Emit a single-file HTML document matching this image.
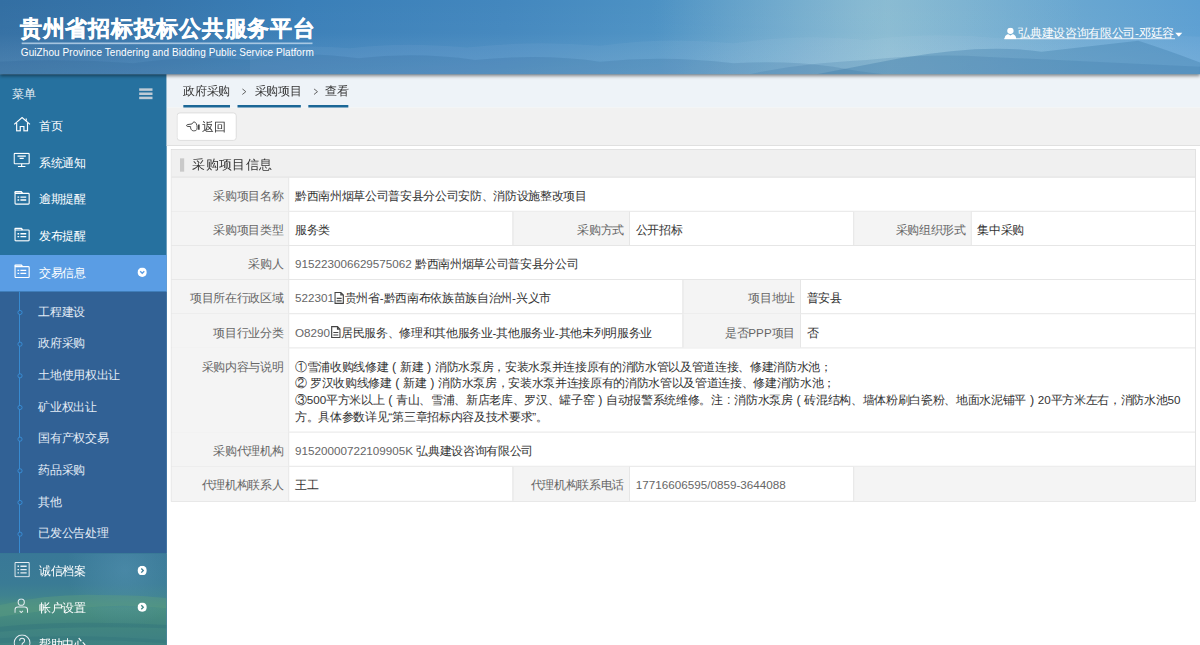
<!DOCTYPE html>
<html><head><meta charset="utf-8">
<style>
*{margin:0;padding:0;box-sizing:border-box}
html,body{width:1200px;height:645px;overflow:hidden;background:#fff}
body{font-family:"Liberation Sans",sans-serif}
#root{transform:scale(0.833333);transform-origin:0 0;width:1440px;height:774px;position:relative;overflow:hidden;font-size:14px;color:#333}
/* header */
#hdr{position:absolute;left:0;top:0;width:1440px;height:89px;z-index:3;overflow:hidden;
 background:linear-gradient(90deg,#2e6b9d 0%,#3478ae 25%,#4286bd 45%,#5a9bc8 65%,#73abcc 80%,#5f9fcc 100%);
 box-shadow:0 2px 4px rgba(0,0,0,.45)}
#hdr .bgsvg{position:absolute;left:0;top:0}
#hdr .title{position:absolute;left:24px;top:15.5px;font-size:27px;font-weight:bold;color:#fff;white-space:nowrap;letter-spacing:0.3px;-webkit-text-stroke:0.45px #fff}
#hdr .uline{position:absolute;left:26px;top:50.5px;width:349px;height:2px;background:rgba(200,222,240,.75)}
#hdr .sub{position:absolute;left:25px;top:56px;font-size:12px;letter-spacing:0.09px;color:#fff;white-space:nowrap}
#hdr .user{position:absolute;left:1205px;top:30px;font-size:14px;color:#fff;white-space:nowrap;text-decoration:underline}
/* sidebar */
#side{position:absolute;left:0;top:89px;width:200px;height:685px;background:#26719f;color:#fff}
#side .mt{height:41px;position:relative}
#side .mt span{position:absolute;left:15px;top:16px;font-size:14px;color:#e6f0f6}
#side .mt .hb{position:absolute;left:167px;top:17px;width:16px;height:14px}
#side .mt .hb i{position:absolute;left:0;width:16px;height:3px;background:#bfcbd6}
#side .mi{height:44px;position:relative}
#side .mi .tx{position:absolute;left:47px;top:12.5px;font-size:14px;color:#fff}
#side .mi svg{position:absolute}
#side .mi.act{background:#5a9de4}
#side .sub{background:#316195;padding:5px 0;position:relative}
#side .sub .vl{position:absolute;left:23px;top:0;bottom:0;width:1.3px;background:#3a93dd}
#side .si{height:38px;position:relative}
#side .si .tx{position:absolute;left:46px;top:11px;font-size:14px;color:#e3ecf5}
#side .si .dot{position:absolute;left:20.5px;top:16.5px;width:6px;height:6px;border:1.3px solid #3a93dd;border-radius:50%;background:#316195}
#side .low{position:relative;height:120px;overflow:hidden;background:#3c7d90}
#side .low .mi{position:relative;z-index:1}
.chev{position:absolute;left:164.5px;width:11.4px;height:11.4px;border-radius:50%;background:#fff}
/* content */
#bc{position:absolute;left:200px;top:89px;width:1240px;height:40px;background:#eef3f8}
#bc .it{position:absolute;top:0;height:40px;border-bottom:3px solid #1b6797;font-size:14px;color:#333;line-height:26px;padding-top:7px;white-space:nowrap}
#bc .it svg{position:absolute;top:17px}
#tb{position:absolute;left:200px;top:129px;width:1240px;height:46px;background:#f1f1f1;border-bottom:1px solid #dcdcdc}
#tb .btn{position:absolute;left:12px;top:6px;width:72px;height:34px;background:#fff;border:1px solid #d9d9d9;border-radius:4px;font-size:14px;color:#333}
#tb .btn span{position:absolute;left:30px;top:7.5px}
#tb .btn svg{position:absolute;left:10px;top:9px}
#panel{position:absolute;left:205px;top:179px;width:1230px;border:1px solid #ddd;background:#fff}
#panel .ph{height:33px;background:#f0f0f0;border-bottom:1px solid #ddd;position:relative}
#panel .ph .bar{position:absolute;left:10px;top:10px;width:5px;height:16px;background:#c9c9c9}
#panel .ph .t{position:absolute;left:25px;top:8px;font-size:16px;color:#333}
.r{display:flex;height:41px;border-bottom:1px solid #e1e1e1}
.r.last{border-bottom:none;height:41px}
.r.big{height:101px}
.c{border-left:1px solid #e1e1e1;height:100%;padding:1.5px 7px 0;font-size:14px;line-height:40px;white-space:nowrap;overflow:hidden;flex:none}
.c:first-child{border-left:none}
.c.l{background:#f4f4f4;color:#666;text-align:right;padding-right:6px}
.c.v{color:#333}
.c .n{color:#666}
.fp{font-style:normal;display:inline-block;width:14px;text-align:center;font-size:15px;line-height:14px}
.c svg.doc{display:inline-block;vertical-align:-2px;margin:0 0.5px}
.r.big .c{line-height:20px;padding-top:11.8px}
</style></head>
<body><div id="root">
<div id="hdr">
 <svg class="bgsvg" width="1440" height="89" viewBox="0 0 1440 89">
  <defs>
   <linearGradient id="hg" x1="0" y1="0" x2="1440" y2="0" gradientUnits="userSpaceOnUse">
    <stop offset="0" stop-color="#336fa3"/><stop offset="0.12" stop-color="#3675ab"/><stop offset="0.25" stop-color="#3a7fb8"/>
    <stop offset="0.42" stop-color="#4387be"/><stop offset="0.55" stop-color="#4d92c4"/><stop offset="0.66" stop-color="#69a5cb"/>
    <stop offset="0.74" stop-color="#80b5cf"/><stop offset="0.84" stop-color="#70abd0"/><stop offset="1" stop-color="#5c9fd2"/>
   </linearGradient>
   <linearGradient id="mist" x1="0" y1="0" x2="0" y2="89" gradientUnits="userSpaceOnUse">
    <stop offset="0" stop-color="#ffffff" stop-opacity="0"/><stop offset="0.45" stop-color="#ffffff" stop-opacity="0.02"/><stop offset="1" stop-color="#cfe3ee" stop-opacity="0.16"/>
   </linearGradient>
   <radialGradient id="glow" cx="1040" cy="10" r="260" gradientUnits="userSpaceOnUse">
    <stop offset="0" stop-color="#a9cfdc" stop-opacity="0.28"/><stop offset="1" stop-color="#a9cfdc" stop-opacity="0"/>
   </radialGradient>
  </defs>
  <rect width="1440" height="89" fill="url(#hg)"/>
  <rect width="1440" height="89" fill="url(#glow)"/>
  <rect width="1440" height="89" fill="url(#mist)"/>
  <path d="M300 89 L300 62 Q360 52 420 58 Q480 50 560 57 Q640 48 720 55 Q800 44 880 52 Q960 40 1040 48 Q1120 38 1200 46 Q1300 36 1440 44 L1440 89 Z" fill="#e8f2f8" fill-opacity="0.05"/>
  <path d="M0 89 L0 74 Q80 70 160 76 Q230 66 300 72 Q360 60 430 70 Q500 62 570 72 Q650 64 720 74 Q800 66 880 76 Q940 72 1000 80 Q1030 86 1060 89 Z" fill="#1f5a88" fill-opacity="0.16"/>
  <path d="M980 89 L1080 70 Q1180 52 1250 62 L1366 49 Q1400 60 1440 75 L1440 89 Z" fill="#3b7aa8" fill-opacity="0.35"/>
  <path d="M900 89 Q960 76 1040 72 Q1120 64 1180 68 L1440 80 L1440 89 Z" fill="#2f6c9a" fill-opacity="0.18"/>
 </svg>
 <div class="title">贵州省招标投标公共服务平台</div>
 <div class="uline"></div>
 <div class="sub">GuiZhou Province Tendering and Bidding Public Service Platform</div>
 <svg style="position:absolute;left:1205px;top:33px" width="15" height="14" viewBox="0 0 15 14"><circle cx="7.5" cy="4" r="3.8" fill="#fff"/><path d="M0.5 14 C0.5 9.5 3 8.2 5 8 L7.5 9.5 L10 8 C12 8.2 14.5 9.5 14.5 14 Z" fill="#fff"/></svg>
 <div class="user" style="left:1205px;width:205px;height:13.6px;top:33px;border-bottom:1px solid #fff;text-decoration:none"></div>
 <div class="user" style="left:1222px;top:31.2px;text-decoration:none">弘典建设咨询有限公司-邓廷容</div>
 <svg style="position:absolute;left:1410px;top:39px" width="9" height="5" viewBox="0 0 9 5"><path d="M0 0H9L4.5 5Z" fill="#fff"/></svg>
</div>
<div id="side">
 <div class="mt"><span>菜单</span><div class="hb"><i style="top:0"></i><i style="top:5px"></i><i style="top:10px"></i></div></div>
 <div class="mi"><svg style="left:16px;top:10px" width="21" height="18" viewBox="0 0 21 18" fill="none" stroke="#fff" stroke-width="1.4"><path d="M1 9.2 L10.5 1 L20 9.2"/><path d="M15.5 5 V2.2"/><path d="M4 7.5 V17 H8.3 V11.8 H12.7 V17 H17 V7.5"/></svg><span class="tx">首页</span></div>
 <div class="mi"><svg style="left:16px;top:9px" width="20" height="18" viewBox="0 0 20 18" fill="none" stroke="#fff" stroke-width="1.4"><rect x="1" y="1" width="18" height="12.5" rx="1"/><path d="M5 4.3 H15 M7.5 7 H12.5 M10 13.5 V16.5 M5.5 16.8 H14.5"/></svg><span class="tx">系统通知</span></div>
 <div class="mi"><svg style="left:16.5px;top:10.5px" width="19" height="17" viewBox="0 0 19 17" fill="none" stroke="#fff" stroke-width="1.4"><path d="M1 3 H17 Q18 3 18 4 V15 Q18 16 17 16 H2 Q1 16 1 15 Z"/><path d="M1 2.6 V1.8 Q1 1 2 1 H8.5 L10 3" stroke-width="1.8"/><path d="M4 7.5 H6 M7.5 7.5 H14.5 M4 11 H6 M7.5 11 H14.5" stroke-width="1.6"/></svg><span class="tx">逾期提醒</span></div>
 <div class="mi"><svg style="left:16.5px;top:10.5px" width="19" height="17" viewBox="0 0 19 17" fill="none" stroke="#fff" stroke-width="1.4"><path d="M1 3 H17 Q18 3 18 4 V15 Q18 16 17 16 H2 Q1 16 1 15 Z"/><path d="M1 2.6 V1.8 Q1 1 2 1 H8.5 L10 3" stroke-width="1.8"/><path d="M4 7.5 H6 M7.5 7.5 H14.5 M4 11 H6 M7.5 11 H14.5" stroke-width="1.6"/></svg><span class="tx">发布提醒</span></div>
 <div class="mi act"><svg style="left:16.5px;top:10.5px" width="19" height="17" viewBox="0 0 19 17" fill="none" stroke="#fff" stroke-width="1.4"><path d="M1 3 H17 Q18 3 18 4 V15 Q18 16 17 16 H2 Q1 16 1 15 Z"/><path d="M1 2.6 V1.8 Q1 1 2 1 H8.5 L10 3" stroke-width="1.8"/><path d="M4 7.5 H6 M7.5 7.5 H14.5 M4 11 H6 M7.5 11 H14.5" stroke-width="1.6"/></svg><span class="tx">交易信息</span>
  <svg style="left:164.7px;top:15.3px" width="11.4" height="11.4" viewBox="0 0 12 12"><circle cx="6" cy="6" r="6" fill="#fff"/><path d="M3.4 4.8 L6 7.3 L8.6 4.8" fill="none" stroke="#5a9de4" stroke-width="1.7"/></svg></div>
 <div class="sub"><div class="vl"></div>
  <div class="si"><span class="dot"></span><span class="tx">工程建设</span></div>
  <div class="si"><span class="dot"></span><span class="tx">政府采购</span></div>
  <div class="si"><span class="dot"></span><span class="tx">土地使用权出让</span></div>
  <div class="si"><span class="dot"></span><span class="tx">矿业权出让</span></div>
  <div class="si"><span class="dot"></span><span class="tx">国有产权交易</span></div>
  <div class="si"><span class="dot"></span><span class="tx">药品采购</span></div>
  <div class="si"><span class="dot"></span><span class="tx">其他</span></div>
  <div class="si"><span class="dot"></span><span class="tx">已发公告处理</span></div>
 </div>
 <div class="low">
  <svg style="position:absolute;left:0;top:0" width="200" height="120" viewBox="0 0 200 120">
   <defs>
    <linearGradient id="lg" x1="0" y1="0" x2="0" y2="120" gradientUnits="userSpaceOnUse">
     <stop offset="0" stop-color="#397897"/><stop offset="0.3" stop-color="#3a7b95"/><stop offset="0.42" stop-color="#3f8290"/>
     <stop offset="0.55" stop-color="#4a8f82"/><stop offset="0.7" stop-color="#42867f"/><stop offset="0.85" stop-color="#3e8182"/><stop offset="1" stop-color="#3f8380"/>
    </linearGradient>
    <radialGradient id="lr" cx="150" cy="20" r="70" gradientUnits="userSpaceOnUse">
     <stop offset="0" stop-color="#5a98b8" stop-opacity="0.45"/><stop offset="1" stop-color="#5a98b8" stop-opacity="0"/>
    </radialGradient>
   </defs>
   <rect width="200" height="120" fill="url(#lg)"/>
   <rect width="200" height="120" fill="url(#lr)"/>
   <path d="M0 62 Q60 48 120 50 Q170 50 200 54 L200 66 Q150 60 90 66 Q40 70 0 76 Z" fill="#5a9c80" fill-opacity="0.45"/>
   <path d="M0 88 Q80 80 200 86 L200 90 Q90 86 0 94 Z" fill="#2f6f7a" fill-opacity="0.35"/>
   <path d="M0 102 Q90 96 200 104 L200 108 Q90 100 0 108 Z" fill="#2f6f7a" fill-opacity="0.3"/>
  </svg>
  <div class="mi"><svg style="left:16.5px;top:10px" width="19" height="19" viewBox="0 0 19 19" fill="none" stroke="#e6edf2" stroke-width="1.25"><rect x="1" y="1" width="17" height="17" rx="0.8"/><path d="M4 5.5 H5.8 M7.5 5.5 H15 M4 9.5 H5.8 M7.5 9.5 H15 M4 13.5 H5.8 M7.5 13.5 H15" stroke-width="1.6"/></svg><span class="tx">诚信档案</span>
   <svg style="left:164.7px;top:15px" width="11.4" height="11.4" viewBox="0 0 12 12"><circle cx="6" cy="6" r="6" fill="#fff"/><path d="M4.8 3.4 L7.3 6 L4.8 8.6" fill="none" stroke="#3c7c94" stroke-width="1.7"/></svg></div>
  <div class="mi"><svg style="left:17px;top:10px" width="17" height="18" viewBox="0 0 17 18" fill="none" stroke="#e6edf2" stroke-width="1.25"><circle cx="8.5" cy="4.6" r="3.7"/><path d="M1 17.3 V13.8 Q1 10.5 4.5 10.5 H12.5 Q16 10.5 16 13.8 V17.3"/><path d="M6.5 15 L8.5 17 L10.5 15"/></svg><span class="tx">帐户设置</span>
   <svg style="left:164.7px;top:15px" width="11.4" height="11.4" viewBox="0 0 12 12"><circle cx="6" cy="6" r="6" fill="#fff"/><path d="M4.8 3.4 L7.3 6 L4.8 8.6" fill="none" stroke="#3f8584" stroke-width="1.7"/></svg></div>
  <div class="mi"><svg style="left:16px;top:9px" width="21" height="21" viewBox="0 0 21 21" fill="none" stroke="#e6edf2" stroke-width="1.25"><circle cx="10.5" cy="10.5" r="9.5"/><path d="M7.5 8 Q7.5 5 10.5 5 Q13.5 5 13.5 7.8 Q13.5 9.5 11.5 10.5 Q10.5 11 10.5 12.5 V13.5"/><path d="M10.5 15.5 V17"/></svg><span class="tx">帮助中心</span></div>
 </div>
</div>
<div id="bc">
 <div class="it" style="left:20px;width:56.4px">政府采购</div>
 <div class="it" style="left:85px;width:76px;padding-left:20.6px"><svg style="left:5.4px" width="6" height="8" viewBox="0 0 6 8"><path d="M0.8 0.6 L5 4 L0.8 7.4" fill="none" stroke="#555" stroke-width="1.1"/></svg>采购项目</div>
 <div class="it" style="left:169.6px;width:48.4px;padding-left:20.6px"><svg style="left:6px" width="6" height="8" viewBox="0 0 6 8"><path d="M0.8 0.6 L5 4 L0.8 7.4" fill="none" stroke="#555" stroke-width="1.1"/></svg>查看</div>
</div>
<div id="tb"><div class="btn"><svg width="17" height="13" viewBox="0 0 17 13" fill="none" stroke="#444" stroke-width="1.15"><path d="M1 5.2 Q0.6 6.3 1.6 6.6 L5.8 7 Q5.4 8.4 6.2 10 Q7.3 12.2 9.6 12.2 Q12.6 12.2 13.3 10.2 Q13.8 8 13.3 5.5 Q12.8 2.8 10.8 1.5 Q9.8 0.8 8.8 1.8 L7.3 3.8 L2 4.5 Q1.2 4.6 1 5.2 Z"/><path d="M15.6 4.3 V10.8" stroke-width="2"/></svg><span>返回</span></div></div>
<div id="panel">
 <div class="ph"><div class="bar"></div><div class="t">采购项目信息</div></div>
 <div class="rows">
  <div class="r"><div class="c l" style="width:140px">采购项目名称</div><div class="c v" style="flex:1">黔西南州烟草公司普安县分公司安防、消防设施整改项目</div></div>
  <div class="r"><div class="c l" style="width:140px">采购项目类型</div><div class="c v" style="width:269px">服务类</div><div class="c l" style="width:140px">采购方式</div><div class="c v" style="width:269px">公开招标</div><div class="c l" style="width:141px">采购组织形式</div><div class="c v" style="flex:1">集中采购</div></div>
  <div class="r"><div class="c l" style="width:140px">采购人</div><div class="c v" style="flex:1"><span class="n">915223006629575062</span> 黔西南州烟草公司普安县分公司</div></div>
  <div class="r"><div class="c l" style="width:140px">项目所在行政区域</div><div class="c v" style="width:473px"><span class="n">522301</span><svg class="doc" width="12" height="15" viewBox="0 0 12 15"><path d="M1 1 H8 L11 4 V14 H1 Z M8 1 V4 H11" fill="none" stroke="#444" stroke-width="1.4"/><path d="M3 8 H9 M3 11 H9" stroke="#444" stroke-width="1.4"/></svg>贵州省-黔西南布依族苗族自治州-兴义市</div><div class="c l" style="width:141px">项目地址</div><div class="c v" style="flex:1">普安县</div></div>
  <div class="r"><div class="c l" style="width:140px">项目行业分类</div><div class="c v" style="width:473px"><span class="n">O8290</span><svg class="doc" width="12" height="15" viewBox="0 0 12 15"><path d="M1 1 H8 L11 4 V14 H1 Z M8 1 V4 H11" fill="none" stroke="#444" stroke-width="1.4"/><path d="M3 8 H9 M3 11 H9" stroke="#444" stroke-width="1.4"/></svg>居民服务、修理和其他服务业-其他服务业-其他未列明服务业</div><div class="c l" style="width:141px">是否PPP项目</div><div class="c v" style="flex:1">否</div></div>
  <div class="r big"><div class="c l" style="width:140px">采购内容与说明</div><div class="c v" style="flex:1">①雪浦收购线修建<i class="fp">(</i>新建<i class="fp">)</i>消防水泵房，安装水泵并连接原有的消防水管以及管道连接、修建消防水池；<br>② 罗汉收购线修建<i class="fp">(</i>新建<i class="fp">)</i>消防水泵房，安装水泵并连接原有的消防水管以及管道连接、修建消防水池；<br>③500平方米以上<i class="fp">(</i>青山、雪浦、新店老库、罗汉、罐子窑<i class="fp">)</i>自动报警系统维修。注<i class="fp">:</i>消防水泵房<i class="fp">(</i>砖混结构、墙体粉刷白瓷粉、地面水泥铺平<i class="fp">)</i>20平方米左右，消防水池50<br>方。具体参数详见“第三章招标内容及技术要求”。</div></div>
  <div class="r"><div class="c l" style="width:140px">采购代理机构</div><div class="c v" style="flex:1"><span class="n">91520000722109905K</span> 弘典建设咨询有限公司</div></div>
  <div class="r last"><div class="c l" style="width:140px">代理机构联系人</div><div class="c v" style="width:269px">王工</div><div class="c l" style="width:140px">代理机构联系电话</div><div class="c v" style="width:269px"><span class="n">17716606595/0859-3644088</span></div><div class="c l" style="flex:1"></div></div>
 </div>
</div>
</div></body></html>
